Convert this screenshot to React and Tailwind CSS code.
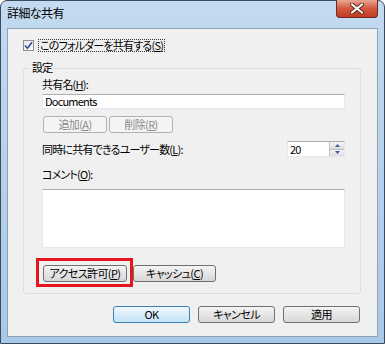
import React from 'react';

const font = { fontFamily: '"Noto Sans CJK JP", "Noto Sans", sans-serif' };

const Btn = ({ children, w, disabled, primary }) => (
 <button
 className={
 'h-[17px] rounded-[3px] border text-[11px] leading-none tracking-[-0.6px] whitespace-nowrap flex items-center justify-center ' +
 (disabled
 ? 'border-[#adb2b5] bg-[#f4f4f4] text-[#8a8a8a]'
 : primary
 ? 'border-[#3c7fb1] bg-gradient-to-b from-[#eef8fe] to-[#c4e3f6] text-black'
 : 'border-[#707070] bg-gradient-to-b from-[#f4f4f4] to-[#d7d7d7] text-black')
 }
 style={{ width: w }}
 >
 {children}
 </button>
);

export default function App() {
 return (
 <div
 className="w-[385px] h-[344px] rounded-t-[7px] border border-[#3b4a5a] bg-gradient-to-b from-[#c3daf0] via-[#b6d1ec] to-[#a9c8e8] flex flex-col [font-feature-settings:'palt']"
 style={font}
 >
 {/* title bar */}
 <div className="h-[27px] flex justify-between pl-[6px] pr-[6px]">
 <div className="pt-[4px] text-[12px] leading-[15px] tracking-[-0.6px] text-black">詳細な共有</div>
 <div className="w-[42px] h-[18px] -mt-[1px] rounded-b-[4px] border border-[#6e2a20] border-t-0 bg-gradient-to-b from-[#e8a595] via-[#d0583f] to-[#c23a22] flex items-center justify-center">
 <svg width="14" height="11" viewBox="0 0 14 11">
 <path d="M2 1.5 L12 9.5 M12 1.5 L2 9.5" stroke="#5a2418" strokeWidth="4" strokeLinecap="round" />
 <path d="M2 1.5 L12 9.5 M12 1.5 L2 9.5" stroke="#ffffff" strokeWidth="2.2" strokeLinecap="round" />
 </svg>
 </div>
 </div>

 {/* client */}
 <div className="mx-[6px] h-[309px] border border-[#8fa3b8] bg-[#f0f0f0] text-[11px] leading-[15px] tracking-[-0.8px] text-black flex flex-col">
 <div className="flex items-center pl-[15px] pt-[9px] h-[24px]">
 <div className="w-[11px] h-[11px] border border-[#8e8f8f] bg-gradient-to-br from-[#e6e6e6] to-[#ffffff] flex items-center justify-center">
 <svg width="9" height="9" viewBox="0 0 9 9">
 <path d="M1 4.5 L3.5 7.2 L8 1.2" fill="none" stroke="#2d4d9c" strokeWidth="1.6" />
 </svg>
 </div>
 <span className="ml-[4px] px-[1px] leading-[11px] border border-dotted border-[#333]">このフォルダーを共有する(<u>S</u>)</span>
 </div>

 {/* group box */}
 <div className="relative ml-[15px] mr-[16px] mt-[15px] h-[226px] border border-[#d5dfe5] rounded-[3px] pl-[18px] pr-[15px] pt-[8px] flex flex-col">
 <span className="absolute -top-[9px] left-[6px] px-[2px] bg-[#f0f0f0]">設定</span>
 <div>共有名(<u>H</u>):</div>
 <div className="mt-[2px] h-[15px] border border-[#e3e9ef] border-t-[#abadb3] bg-white pl-[2px] leading-[13px]">Documents</div>
 <div className="mt-[7px] flex gap-[2px] pl-[1px]">
 <Btn w={64} disabled>追加(<u>A</u>)</Btn>
 <Btn w={64} disabled>削除(<u>R</u>)</Btn>
 </div>
 <div className="mt-[8px] flex items-center justify-between h-[16px]">
 <span>同時に共有できるユーザー数(<u>L</u>):</span>
 <div className="flex h-[16px] w-[58px] border border-[#e3e9ef] border-t-[#abadb3] bg-white">
 <span className="flex-1 pl-[2px] leading-[14px]">20</span>
 <div className="w-[15px] flex flex-col border-l border-[#c0c4c8]">
 <div className="flex-1 flex items-center justify-center bg-gradient-to-b from-[#f5f5f5] to-[#dcdcdc] border-b border-[#b8bcc0]">
 <svg width="5" height="3" viewBox="0 0 5 3"><path d="M0 3 L2.5 0 L5 3Z" fill="#3a5ea8" /></svg>
 </div>
 <div className="flex-1 flex items-center justify-center bg-gradient-to-b from-[#f5f5f5] to-[#dcdcdc]">
 <svg width="5" height="3" viewBox="0 0 5 3"><path d="M0 0 L2.5 3 L5 0Z" fill="#3a5ea8" /></svg>
 </div>
 </div>
 </div>
 </div>
 <div className="mt-[10px]">コメント(<u>O</u>):</div>
 <div className="mt-[7px] h-[59px] border border-[#e3e9ef] border-t-[#abadb3] bg-white"></div>
 <div className="mt-[17px] flex gap-[6px] pl-[1px]">
 <span className="relative">
 <Btn w={84}>アクセス許可(<u>P</u>)</Btn>
 <span className="absolute -left-[7px] -right-[6px] -top-[7px] -bottom-[5px] border-[3px] border-[#e5141f]"></span>
 </span>
 <Btn w={83}>キャッシュ(<u>C</u>)</Btn>
 </div>
 </div>

 <div className="mt-[12px] flex justify-end gap-[8px] pr-[17px]">
 <Btn w={77} primary>OK</Btn>
 <Btn w={77}>キャンセル</Btn>
 <Btn w={77}>適用</Btn>
 </div>
 </div>
 </div>
 );
}
